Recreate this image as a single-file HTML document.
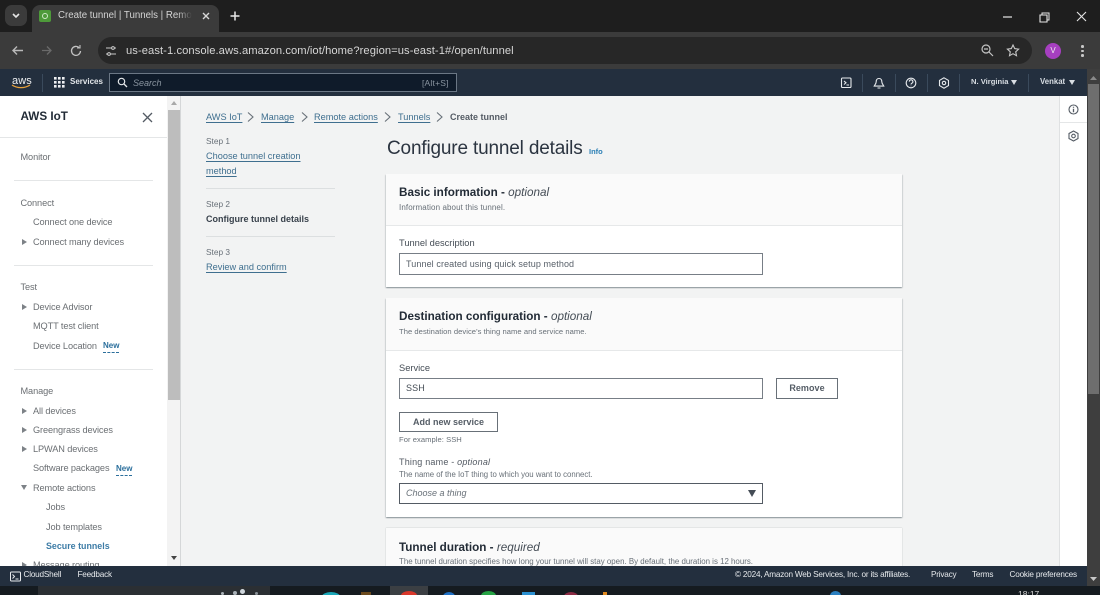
<!DOCTYPE html>
<html><head><meta charset="utf-8"><style>
html,body{margin:0;padding:0;background:#000}
#p{position:relative;width:1100px;height:595px;overflow:hidden;background:#f2f3f3;font-family:"Liberation Sans",sans-serif}
#p div,#p span.a,#p svg{position:absolute}
.t{white-space:nowrap;line-height:14px}
.n{font-size:9.2px;color:#6b6f73;letter-spacing:-.1px}
.l{font-size:9.2px;color:#3f6f8f;text-decoration:underline;text-underline-offset:2px}
.s{font-size:8.3px;color:#687078}
.h{font-size:11.7px;font-weight:bold;color:#222b36}
.h i{font-weight:normal;color:#444c55}
.d{font-size:7.6px;color:#687078;letter-spacing:.05px}
.lb{font-size:9.3px;color:#444c55}
.inp{background:#fff;border:1px solid #777e86;box-sizing:border-box}
.btn{background:#fff;border:1px solid #687078;box-sizing:border-box;font-size:9px;font-weight:bold;color:#555d66;text-align:center}
.tri{width:0;height:0;border-left:5px solid #7d8287;border-top:3px solid transparent;border-bottom:3px solid transparent}
.new{font-size:8px;font-weight:bold;color:#2b6f9c;border-bottom:1px dashed #2b6f9c;line-height:10px;padding-bottom:1px;white-space:nowrap}
.hr{height:1px;background:#e4e6e7}
.w{font-size:8.2px;color:#e6e9ec;white-space:nowrap;line-height:12px;letter-spacing:-.2px}
.sep{width:1px;height:18px;background:#3a4a5c;top:74px}
</style></head><body><div id="p">

<!-- tab strip -->
<div style="left:0;top:0;width:1100px;height:32px;background:#1e1e1e"></div>
<div style="left:5px;top:5px;width:22px;height:21px;background:#3b3b3b;border-radius:7px"></div>
<svg style="left:11px;top:12px" width="10" height="8"><path d="M2 2l3 3 3-3" fill="none" stroke="#e4e4e4" stroke-width="1.6"/></svg>
<div style="left:32px;top:5px;width:187px;height:27px;background:#3b3b3b;border-radius:8px 8px 0 0"></div>
<div style="left:39px;top:10px;width:12px;height:12px;background:#4e9a3a;border-radius:2px"></div>
<svg style="left:41px;top:12px" width="8" height="8"><circle cx="4" cy="4" r="2.5" fill="none" stroke="#cfe8c8" stroke-width="1"/></svg>
<div class="t" style="left:58px;top:9px;width:134px;overflow:hidden;font-size:9.7px;color:#d4d4d4">Create tunnel | Tunnels | Remote</div>
<div style="left:178px;top:8px;width:14px;height:16px;background:linear-gradient(90deg,rgba(59,59,59,0),#3b3b3b)"></div>
<svg style="left:201px;top:11px" width="10" height="10"><path d="M2 2l6 6M8 2l-6 6" stroke="#d8d8d8" stroke-width="1.4"/></svg>
<svg style="left:229px;top:10px" width="12" height="12"><path d="M6 1.5v9M1.5 6h9" stroke="#e8e8e8" stroke-width="1.5"/></svg>
<svg style="left:1000px;top:10px" width="90" height="14"><path d="M3 7h9" stroke="#e6e6e6" stroke-width="1.2"/><path d="M40 5h7v7h-7z" fill="none" stroke="#e6e6e6" stroke-width="1.1"/><path d="M42 5V3h7v7h-2" fill="none" stroke="#e6e6e6" stroke-width="1"/><path d="M77 2l9 9M86 2l-9 9" stroke="#e6e6e6" stroke-width="1.1"/></svg>

<!-- toolbar -->
<div style="left:0;top:32px;width:1100px;height:37px;background:#3b3b3b"></div>
<svg style="left:10px;top:43px" width="72" height="15"><path d="M3 7.5h10M7 3.500l-4 4 4 4" fill="none" stroke="#b9b9b9" stroke-width="1.4"/><path d="M32 7.500h9M37 3.500l4 4-4 4" fill="none" stroke="#6a6a6a" stroke-width="1.3"/><path d="M69 4.500A4.500 4.500 0 1 0 70.500 8" fill="none" stroke="#c2c2c2" stroke-width="1.3"/><path d="M70 2v3h-3" fill="none" stroke="#c2c2c2" stroke-width="1.1"/></svg>
<div style="left:98px;top:37px;width:934px;height:27px;background:#272727;border-radius:14px"></div>
<svg style="left:105px;top:45px" width="12" height="12"><path d="M1 3h6M9 3h2M1 9h2M5 9h6" stroke="#c8c8c8" stroke-width="1.1"/><circle cx="8" cy="3" r="1.4" fill="none" stroke="#c8c8c8"/><circle cx="4" cy="9" r="1.4" fill="none" stroke="#c8c8c8"/></svg>
<div class="t" style="left:126px;top:43.5px;font-size:11.2px;color:#d6d6d6;letter-spacing:.07px">us-east-1.console.aws.amazon.com/iot/home?region=us-east-1#/open/tunnel</div>
<svg style="left:980px;top:43px" width="40" height="15"><circle cx="6" cy="6" r="4" fill="none" stroke="#c4c4c4" stroke-width="1.2"/><path d="M4 6h4M9 9l4 4" stroke="#c4c4c4" stroke-width="1.2"/><path d="M33 2l1.700 3.600 3.900.5-2.900 2.700.8 3.900-3.500-2-3.500 2 .8-3.900-2.900-2.700 3.900-.5z" fill="none" stroke="#c8c8c8" stroke-width="1.1"/></svg>
<div class="t" style="left:1045px;top:43px;width:16px;height:16px;border-radius:50%;background:#a63fc0;color:#eee;font-size:8px;text-align:center;line-height:16px">V</div>
<div style="left:1081px;top:45px;width:2.5px;height:2.5px;background:#c8c8c8;border-radius:50%"></div>
<div style="left:1081px;top:49.5px;width:2.5px;height:2.5px;background:#c8c8c8;border-radius:50%"></div>
<div style="left:1081px;top:54px;width:2.5px;height:2.5px;background:#c8c8c8;border-radius:50%"></div>

<!-- aws nav -->
<div style="left:0;top:69px;width:1087px;height:27px;background:#232f3e"></div>
<div style="left:1087px;top:69px;width:13px;height:526px;background:#3e3e3e"></div>
<div class="t" style="left:12px;top:74px;font-size:11px;color:#eef0f2;letter-spacing:.1px">aws</div>
<svg style="left:11px;top:84px" width="21" height="6"><path d="M1 1c5 3.500 13 3.500 18 0" fill="none" stroke="#e9a23b" stroke-width="1.3"/></svg>
<svg style="left:54px;top:77px" width="11" height="11" fill="#eef0f2"><rect x="0" y="0" width="2.600" height="2.600"/><rect x="4" y="0" width="2.600" height="2.600"/><rect x="8" y="0" width="2.600" height="2.600"/><rect x="0" y="4" width="2.600" height="2.600"/><rect x="4" y="4" width="2.600" height="2.600"/><rect x="8" y="4" width="2.600" height="2.600"/><rect x="0" y="8" width="2.600" height="2.600"/><rect x="4" y="8" width="2.600" height="2.600"/><rect x="8" y="8" width="2.600" height="2.600"/></svg>
<div class="t" style="left:70px;top:75px;font-size:8px;font-weight:bold;color:#e4e7ea">Services</div>
<div style="left:109px;top:73px;width:348px;height:19px;background:#0f1b2a;border:1px solid #6b7785;box-sizing:border-box"></div>
<svg style="left:117px;top:77px" width="11" height="11"><circle cx="4.500" cy="4.500" r="3.200" fill="none" stroke="#e4e7ea" stroke-width="1.2"/><path d="M7 7l3 3" stroke="#e4e7ea" stroke-width="1.3"/></svg>
<div class="t" style="left:133px;top:76px;font-size:9px;font-style:italic;color:#8a95a0">Search</div>
<div class="t" style="left:422px;top:76px;font-size:8.5px;color:#8a95a0;letter-spacing:.2px">[Alt+S]</div>
<div class="sep" style="left:42px"></div>
<div class="sep" style="left:862px"></div><div class="sep" style="left:895px"></div><div class="sep" style="left:927px"></div><div class="sep" style="left:959px"></div><div class="sep" style="left:1028px"></div>
<svg style="left:840px;top:76px" width="115" height="14" fill="none" stroke="#e6e9ec" stroke-width="1.1"><rect x="1.500" y="2" width="9.500" height="9.500" rx="1"/><path d="M4 5l2 1.800L4 8.500M6.500 9h2.500"/><path d="M39 2.500c-2 0-2.800 1.600-2.800 3.200 0 2-1.600 3.400-2 4.400h9.600c-.4-1-2-2.400-2-4.400 0-1.600-.8-3.200-2.800-3.200zM37.500 12h3"/><circle cx="71" cy="7" r="4.800"/><path d="M69.300 5.600a1.800 1.800 0 1 1 2.500 1.700c-.6.3-.8.6-.8 1.200M71 9.800v.4"/><path d="M104 1.800l4.500 2.600v5.200l-4.500 2.600-4.500-2.600V4.400z"/><circle cx="104" cy="7" r="1.700"/></svg>
<div class="t" style="left:971px;top:75px;font-size:7.600px;font-weight:bold;color:#d9dee3">N. Virginia</div>
<div class="t" style="left:1040px;top:75px;font-size:7.800px;font-weight:bold;color:#d9dee3">Venkat</div>
<svg style="left:1011px;top:80px" width="7" height="5"><path d="M0 0h6L3 5z" fill="#d9dee3"/></svg>
<svg style="left:1069px;top:80px" width="7" height="5"><path d="M0 0h6L3 5z" fill="#d9dee3"/></svg>

<!-- outer scrollbar -->
<svg style="left:1089px;top:75px" width="9" height="6"><path d="M4.500 1L8 5H1z" fill="#8a8a8a"/></svg>
<div style="left:1088px;top:84px;width:11px;height:310px;background:#6e6e6e"></div>
<svg style="left:1089px;top:576px" width="9" height="6"><path d="M1 1h7L4.500 5z" fill="#c8c8c8"/></svg>

<!-- sidebar -->
<div style="left:0;top:96px;width:167px;height:470px;background:#fff"></div>
<div style="left:167px;top:96px;width:14px;height:470px;background:#f3f3f3;border-right:1px solid #d5d7d8;box-sizing:border-box"></div>
<div style="left:168px;top:110px;width:12px;height:290px;background:#bdbdbd"></div>
<svg style="left:170px;top:100px" width="8" height="6"><path d="M4 1l3 4H1z" fill="#a8a8a8"/></svg>
<svg style="left:170px;top:555px" width="8" height="6"><path d="M1 1h6L4 5z" fill="#444"/></svg>
<div class="t" style="left:20.500px;top:110px;font-size:11.700px;font-weight:bold;color:#222b36">AWS IoT</div>
<svg style="left:142px;top:112px" width="11" height="11"><path d="M1 1l9 9M10 1l-9 9" stroke="#545b64" stroke-width="1.300"/></svg>
<div class="hr" style="left:0;top:137px;width:167px"></div>
<div class="t n" style="left:20.500px;top:150px">Monitor</div>
<div class="hr" style="left:14px;top:180px;width:139px"></div>
<div class="t n" style="left:20.500px;top:196px">Connect</div>
<div class="t n" style="left:33px;top:215px">Connect one device</div>
<div class="tri" style="left:22px;top:239px"></div>
<div class="t n" style="left:33px;top:235px">Connect many devices</div>
<div class="hr" style="left:14px;top:265px;width:139px"></div>
<div class="t n" style="left:20.500px;top:280px">Test</div>
<div class="tri" style="left:22px;top:304px"></div>
<div class="t n" style="left:33px;top:300px">Device Advisor</div>
<div class="t n" style="left:33px;top:319px">MQTT test client</div>
<div class="t n" style="left:33px;top:339px">Device Location</div>
<div class="new a" style="left:103px;top:341px">New</div>
<div class="hr" style="left:14px;top:369px;width:139px"></div>
<div class="t n" style="left:20.500px;top:384px">Manage</div>
<div class="tri" style="left:22px;top:408px"></div>
<div class="t n" style="left:33px;top:404px">All devices</div>
<div class="tri" style="left:22px;top:427px"></div>
<div class="t n" style="left:33px;top:423px">Greengrass devices</div>
<div class="tri" style="left:22px;top:446px"></div>
<div class="t n" style="left:33px;top:442px">LPWAN devices</div>
<div class="t n" style="left:33px;top:461px">Software packages</div>
<div class="new a" style="left:116px;top:464px">New</div>
<svg style="left:21px;top:485px" width="7" height="6"><path d="M0 0h6L3 5z" fill="#7d8287"/></svg>
<div class="t n" style="left:33px;top:481px">Remote actions</div>
<div class="t n" style="left:46px;top:500px">Jobs</div>
<div class="t n" style="left:46px;top:520px">Job templates</div>
<div class="t" style="left:46px;top:539px;font-size:8.900px;font-weight:bold;color:#3d7ca6">Secure tunnels</div>
<div class="tri" style="left:22px;top:562px"></div>
<div class="t n" style="left:33px;top:558px">Message routing</div>

<!-- breadcrumb -->
<div class="t l" style="left:206px;top:110px">AWS IoT</div>
<div class="t l" style="left:261px;top:110px">Manage</div>
<div class="t l" style="left:314px;top:110px">Remote actions</div>
<div class="t l" style="left:398px;top:110px">Tunnels</div>
<div class="t" style="left:450px;top:110px;font-size:9px;font-weight:bold;color:#545b64">Create tunnel</div>
<svg style="left:246px;top:111px" width="10" height="12"><path d="M2 1.500l5 4.500-5 4.500" fill="none" stroke="#687078" stroke-width="1.100"/></svg>
<svg style="left:300px;top:111px" width="10" height="12"><path d="M2 1.500l5 4.500-5 4.500" fill="none" stroke="#687078" stroke-width="1.100"/></svg>
<svg style="left:383px;top:111px" width="10" height="12"><path d="M2 1.500l5 4.500-5 4.500" fill="none" stroke="#687078" stroke-width="1.100"/></svg>
<svg style="left:435px;top:111px" width="10" height="12"><path d="M2 1.500l5 4.500-5 4.500" fill="none" stroke="#687078" stroke-width="1.100"/></svg>

<!-- steps -->
<div class="t s" style="left:206px;top:134px">Step 1</div>
<div class="t l" style="left:206px;top:149px">Choose tunnel creation</div>
<div class="t l" style="left:206px;top:164px">method</div>
<div class="hr" style="left:206px;top:188px;width:129px;background:#dcdfe0"></div>
<div class="t s" style="left:206px;top:197px">Step 2</div>
<div class="t" style="left:206px;top:212px;font-size:9px;font-weight:bold;color:#39424c">Configure tunnel details</div>
<div class="hr" style="left:206px;top:236px;width:129px;background:#dcdfe0"></div>
<div class="t s" style="left:206px;top:245px">Step 3</div>
<div class="t l" style="left:206px;top:260px">Review and confirm</div>

<!-- title -->
<div class="t" style="left:387px;top:138px;line-height:22px;font-size:19px;color:#2b3440;letter-spacing:-.17px">Configure tunnel details</div>
<div class="t" style="left:589px;top:145px;font-size:7.500px;font-weight:bold;color:#2b7fb5">Info</div>

<!-- card 1 -->
<div style="left:386px;top:174px;width:516px;height:113px;background:#fff;box-shadow:0 1px 1px rgba(0,28,36,.3),1px 1px 1px rgba(0,28,36,.1),-1px 1px 1px rgba(0,28,36,.1)"></div>
<div style="left:386px;top:174px;width:516px;height:52px;background:#fafafa;border-bottom:1px solid #e6e8e9;box-sizing:border-box"></div>
<div class="t h" style="left:399px;top:186px">Basic information - <i>optional</i></div>
<div class="t d" style="left:399px;top:201px;font-size:8px;letter-spacing:.1px">Information about this tunnel.</div>
<div class="t lb" style="left:399px;top:236px">Tunnel description</div>
<div class="inp" style="left:399px;top:253px;width:364px;height:22px"></div>
<div class="t" style="left:406px;top:257px;font-size:9px;color:#59616a;letter-spacing:.1px">Tunnel created using quick setup method</div>

<!-- card 2 -->
<div style="left:386px;top:298px;width:516px;height:219px;background:#fff;box-shadow:0 1px 1px rgba(0,28,36,.3),1px 1px 1px rgba(0,28,36,.1),-1px 1px 1px rgba(0,28,36,.1)"></div>
<div style="left:386px;top:298px;width:516px;height:53px;background:#fafafa;border-bottom:1px solid #e6e8e9;box-sizing:border-box"></div>
<div class="t h" style="left:399px;top:310px">Destination configuration - <i>optional</i></div>
<div class="t d" style="left:399px;top:325px">The destination device's thing name and service name.</div>
<div class="t lb" style="left:399px;top:361px">Service</div>
<div class="inp" style="left:399px;top:378px;width:364px;height:21px"></div>
<div class="t" style="left:406px;top:381px;font-size:9px;color:#444c55;letter-spacing:.1px">SSH</div>
<div class="btn t" style="left:776px;top:378px;width:62px;height:21px;line-height:19px;letter-spacing:.05px">Remove</div>
<div class="btn t" style="left:399px;top:412px;width:99px;height:20px;line-height:19px">Add new service</div>
<div class="t d" style="left:399px;top:433px">For example: SSH</div>
<div class="t" style="left:399px;top:455px;font-size:9px;color:#545b64;letter-spacing:.2px">Thing name - <i>optional</i></div>
<div class="t d" style="left:399px;top:468px;font-size:7.800px;letter-spacing:0">The name of the IoT thing to which you want to connect.</div>
<div class="inp" style="left:399px;top:483px;width:364px;height:21px;border-color:#545b64"></div>
<div class="t" style="left:406px;top:486px;font-size:9px;font-style:italic;color:#687078">Choose a thing</div>
<svg style="left:748px;top:489.500px" width="9" height="8"><path d="M0 0h8L4 7z" fill="#444c55"/></svg>

<!-- card 3 -->
<div style="left:386px;top:528px;width:516px;height:50px;background:#fafafa;box-shadow:0 0 1px rgba(0,28,36,.3)"></div>
<div class="t h" style="left:399px;top:541px">Tunnel duration - <i>required</i></div>
<div class="t d" style="left:399px;top:555px;font-size:7.900px;letter-spacing:0">The tunnel duration specifies how long your tunnel will stay open. By default, the duration is 12 hours.</div>

<!-- right rail -->
<div style="left:1059px;top:96px;width:28px;height:470px;background:#fff;border-left:1px solid #dfe1e2;box-sizing:border-box"></div>
<div class="hr" style="left:1060px;top:122px;width:27px"></div>
<svg style="left:1067px;top:103px" width="14" height="42" fill="none" stroke="#545b64" stroke-width="1.100"><circle cx="6.500" cy="6.500" r="4.500"/><path d="M6.500 5.800v3.500M6.500 3.800v1" stroke-width="1.300"/><path d="M6.500 28l4.500 2.500v5L6.500 38 2 35.500v-5z"/><circle cx="6.500" cy="33" r="1.800"/></svg>

<!-- footer -->
<div style="left:0;top:566px;width:1087px;height:20px;background:#232f3e"></div>
<svg style="left:10px;top:571px" width="11" height="11" fill="none" stroke="#e6e9ec" stroke-width="1"><rect x=".5" y="1" width="10" height="9" rx="1"/><path d="M2.500 3.500l2 2-2 2M5.500 8h3"/></svg>
<div class="w" style="left:23.500px;top:569px">CloudShell</div>
<div class="w" style="left:77.500px;top:569px">Feedback</div>
<div class="w" style="left:735px;top:569px">© 2024, Amazon Web Services, Inc. or its affiliates.</div>
<div class="w" style="left:931px;top:569px">Privacy</div>
<div class="w" style="left:972px;top:569px">Terms</div>
<div class="w" style="left:1009.500px;top:569px">Cookie preferences</div>

<!-- taskbar -->
<div style="left:0;top:586px;width:1087px;height:9px;background:#151b20"></div>
<div style="left:1087px;top:586px;width:13px;height:9px;background:#151b20"></div>
<div style="left:38px;top:586px;width:232px;height:9px;background:#2b2f33"></div>
<div style="left:390px;top:586px;width:38px;height:9px;background:#3b3f43"></div>
<div style="left:322px;top:592px;width:18px;height:9px;border-radius:50%;background:#1aa7b8"></div>
<div style="left:361px;top:592px;width:10px;height:9px;background:#6b4a1e"></div>
<div style="left:401px;top:591px;width:16px;height:9px;border-radius:50%;background:#d9382b"></div>
<div style="left:443px;top:592px;width:12px;height:9px;border-radius:50%;background:#1e6fc4"></div>
<div style="left:481px;top:591px;width:15px;height:9px;border-radius:50%;background:#25a244"></div>
<div style="left:522px;top:592px;width:13px;height:9px;background:#2a8fd0"></div>
<div style="left:564px;top:592px;width:14px;height:9px;border-radius:50%;background:#8a2b44"></div>
<div style="left:603px;top:592px;width:4px;height:5px;background:#e08a20"></div>
<div style="left:830px;top:591px;width:11px;height:9px;border-radius:50%;background:#2a7fc0"></div>
<div style="left:221px;top:592px;width:3px;height:3px;border-radius:50%;background:#aab2b8"></div>
<div style="left:233px;top:591px;width:4px;height:4px;border-radius:50%;background:#aab2b8"></div>
<div style="left:240px;top:589px;width:5px;height:5px;border-radius:50%;background:#cfd6dc"></div>
<div style="left:255px;top:592px;width:3px;height:3px;border-radius:50%;background:#8a9298"></div>
<div class="t" style="left:1018px;top:590px;font-size:8.500px;line-height:9px;color:#d8d8d8">18:17</div>
</div></body></html>
